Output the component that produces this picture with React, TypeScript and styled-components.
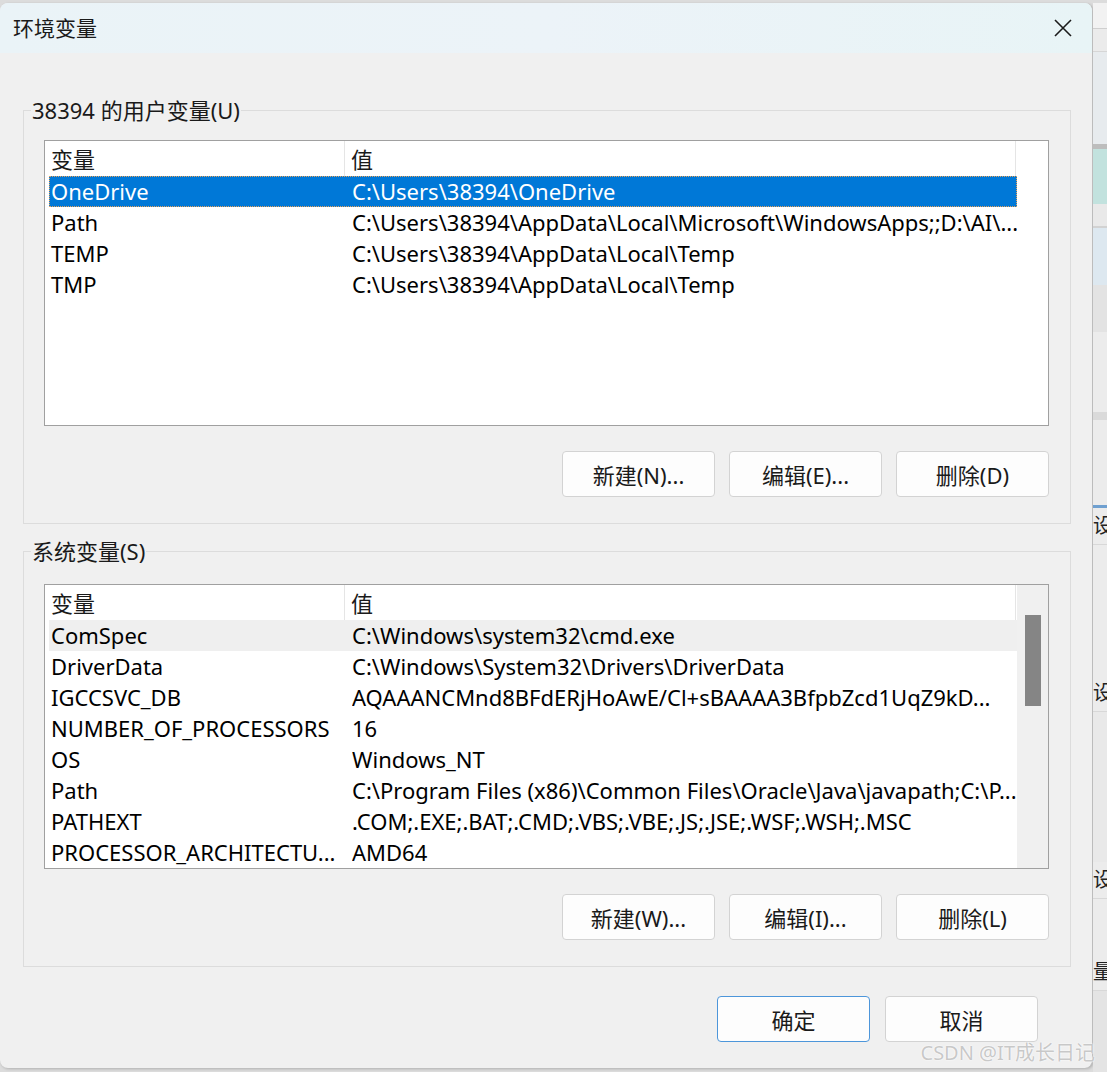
import React from 'react';
import styled, { createGlobalStyle } from 'styled-components';

const GlobalStyle = createGlobalStyle`
  html, body {
    margin: 0;
    padding: 0;
    background: #dedede;
  }
  body {
    font-family: "Noto Sans", "Noto Sans CJK SC", sans-serif;
    color: #000;
  }
`

type Row = { name: string; value: string }

const userVars: Row[] = [
  { name: 'OneDrive', value: 'C:\\Users\\38394\\OneDrive' },
  { name: 'Path', value: 'C:\\Users\\38394\\AppData\\Local\\Microsoft\\WindowsApps;;D:\\AI\\...' },
  { name: 'TEMP', value: 'C:\\Users\\38394\\AppData\\Local\\Temp' },
  { name: 'TMP', value: 'C:\\Users\\38394\\AppData\\Local\\Temp' },
]

const systemVars: Row[] = [
  { name: 'ComSpec', value: 'C:\\Windows\\system32\\cmd.exe' },
  { name: 'DriverData', value: 'C:\\Windows\\System32\\Drivers\\DriverData' },
  { name: 'IGCCSVC_DB', value: 'AQAAANCMnd8BFdERjHoAwE/Cl+sBAAAA3BfpbZcd1UqZ9kD...' },
  { name: 'NUMBER_OF_PROCESSORS', value: '16' },
  { name: 'OS', value: 'Windows_NT' },
  { name: 'Path', value: 'C:\\Program Files (x86)\\Common Files\\Oracle\\Java\\javapath;C:\\P...' },
  { name: 'PATHEXT', value: '.COM;.EXE;.BAT;.CMD;.VBS;.VBE;.JS;.JSE;.WSF;.WSH;.MSC' },
  { name: 'PROCESSOR_ARCHITECTU...', value: 'AMD64' },
]

// bands of the window that peeks out behind the dialog
const backBands = [
  { h: 25, c: '#f2f2f2' },
  { h: 1, c: '#cfcfcf' },
  { h: 22, c: '#ebebeb' },
  { h: 1, c: '#d6d6d6' },
  { h: 92, c: '#e7ebee' },
  { h: 5, c: '#bdbdbd' },
  { h: 55, c: '#c2e2de' },
  { h: 22, c: '#e9e9e9' },
  { h: 2, c: '#d2d2d2' },
  { h: 57, c: '#dde8f0' },
  { h: 47, c: '#e3e3e3' },
  { h: 80, c: '#ececec' },
  { h: 8, c: '#dadada' },
  { h: 85, c: '#ececec' },
  { h: 3, c: '#6fa0d0' },
]

const App: React.FC = () => {
  return (
    <Page>
      <GlobalStyle />
      <Dialog>
        <TitleBar>
          <Title>环境变量</Title>
          <svg width="18" height="18" viewBox="0 0 18 18">
            <path d="M1 1 L17 17 M17 1 L1 17" stroke="#1b1b1b" strokeWidth="1.6" fill="none" />
          </svg>
        </TitleBar>
        <Body>
          <Group $gap={15}>
            <legend>38394 的用户变量(U)</legend>
            <GroupInner $top={18}>
              <VarList rows={userVars} selected={0} height={284} />
              <ButtonRow>
                <Button>新建(N)...</Button>
                <Button>编辑(E)...</Button>
                <Button>删除(D)</Button>
              </ButtonRow>
            </GroupInner>
          </Group>
          <Group $gap={0}>
            <legend>系统变量(S)</legend>
            <GroupInner $top={21}>
              <VarList rows={systemVars} hovered={0} height={283} scroll />
              <ButtonRow>
                <Button>新建(W)...</Button>
                <Button>编辑(I)...</Button>
                <Button>删除(L)</Button>
              </ButtonRow>
            </GroupInner>
          </Group>
          <Footer>
            <Button $primary>确定</Button>
            <Button>取消</Button>
          </Footer>
        </Body>
      </Dialog>
      <BackStrip>
        {backBands.map((b, i) => (
          <Band key={i} $h={b.h} $c={b.c} />
        ))}
        <BackLabel>设置</BackLabel>
        <Band $h={130} $c="#ececec" />
        <BackLabel>设置</BackLabel>
        <Band $h={150} $c="#e9e9e9" />
        <BackLabel>设置</BackLabel>
        <Band $h={55} $c="#ececec" />
        <BackLabel>量</BackLabel>
      </BackStrip>
      <Watermark>CSDN @IT成长日记</Watermark>
    </Page>
  )
}

type ListProps = {
  rows: Row[]
  selected?: number
  hovered?: number
  height: number
  scroll?: boolean
}

const VarList: React.FC<ListProps> = ({ rows, selected, hovered, height, scroll }) => {
  return (
    <ListBox style={{ height }}>
      <ListMain>
        <Header>
          <HeadCell $w={300}>变量</HeadCell>
          <HeadCell $w={671}>值</HeadCell>
        </Header>
        {rows.map((r, i) => (
          <ItemRow
            key={i}
            $state={i === selected ? 'selected' : i === hovered ? 'hover' : 'none'}
          >
            <NameCell>{r.name}</NameCell>
            <ValueCell>{r.value}</ValueCell>
          </ItemRow>
        ))}
      </ListMain>
      <ScrollTrack $show={!!scroll}>
        {scroll && <Thumb />}
      </ScrollTrack>
    </ListBox>
  )
}

const Page = styled.div`
  position: relative;
  display: flex;
  align-items: flex-start;
  width: 1107px;
  height: 1072px;
  padding-top: 3px;
  box-sizing: border-box;
  overflow: hidden;
  background: #dcdcdc;
`

const Dialog = styled.div`
  width: 1093px;
  height: 1065px;
  flex-shrink: 0;
  display: flex;
  flex-direction: column;
  background: #f0f0f0;
  border-radius: 8px;
  border-right: 1px solid #bcbcbc;
  box-sizing: border-box;
  overflow: hidden;
  box-shadow: 1px 1px 3px rgba(0, 0, 0, 0.2);
`

const TitleBar = styled.div`
  height: 50px;
  flex-shrink: 0;
  display: flex;
  align-items: center;
  justify-content: space-between;
  padding: 0 20px 0 13px;
  background: linear-gradient(90deg, #eaf3f7 0%, #ecf3f8 50%, #e8f4f6 100%);
`

const Title = styled.div`
  font-size: 21px;
  line-height: 24px;
  color: #1a1a1a;
`

const Body = styled.div`
  flex: 1;
  display: flex;
  flex-direction: column;
  padding: 45px 21px 0 23px;
`

const Group = styled.fieldset<{ $gap: number }>`
  margin: 0 0 ${p => p.$gap}px 0;
  padding: 0;
  border: 1px solid #dcdcdc;
  min-width: 0;

  legend {
    margin-left: 7px;
    padding: 0 1px;
    font-size: 22px;
    line-height: 24px;
    color: #1a1a1a;
  }
`

const GroupInner = styled.div<{ $top: number }>`
  display: flex;
  flex-direction: column;
  padding: ${p => p.$top}px 21px 26px 20px;
`

const ListBox = styled.div`
  display: flex;
  border: 1px solid #a0a0a0;
  background: #fff;
  overflow: hidden;
`

const ListMain = styled.div`
  width: 972px;
  display: flex;
  flex-direction: column;
`

const Header = styled.div`
  display: flex;
  height: 35px;
  flex-shrink: 0;
`

const HeadCell = styled.div<{ $w: number }>`
  width: ${p => p.$w}px;
  padding-left: 6px;
  box-sizing: border-box;
  border-right: 1px solid #e5e5e5;
  font-size: 22px;
  line-height: 37px;
  color: #1a1a1a;
`

const ItemRow = styled.div<{ $state: 'selected' | 'hover' | 'none' }>`
  display: flex;
  height: 31px;
  flex-shrink: 0;
  margin-left: 4px;
  box-sizing: border-box;
  font-size: 22px;
  line-height: 31px;
  white-space: nowrap;
  background: ${p => (p.$state === 'selected' ? '#0078d7' : p.$state === 'hover' ? '#efefef' : 'transparent')};
  color: ${p => (p.$state === 'selected' ? '#fff' : '#000')};
  outline: ${p => (p.$state === 'selected' ? '1px dotted #e8a25a' : 'none')};
  outline-offset: -1px;
`

const NameCell = styled.div`
  width: 303px;
  padding-left: 2px;
  box-sizing: border-box;
  overflow: hidden;
`

const ValueCell = styled.div`
  flex: 1;
  overflow: hidden;
`

const ScrollTrack = styled.div<{ $show: boolean }>`
  flex: 1;
  display: flex;
  justify-content: center;
  padding-top: 30px;
  background: ${p => (p.$show ? '#f0f0f0' : '#fff')};
`

const Thumb = styled.div`
  width: 16px;
  height: 91px;
  background: #858585;
`

const ButtonRow = styled.div`
  display: flex;
  justify-content: flex-end;
  gap: 14px;
  margin-top: 25px;
`

const Button = styled.button<{ $primary?: boolean }>`
  width: 153px;
  height: 46px;
  padding: 0;
  border-radius: 4px;
  border: 1px solid ${p => (p.$primary ? '#4d96da' : '#d3d3d3')};
  background: #fdfdfd;
  font-family: "Noto Sans", "Noto Sans CJK SC", sans-serif;
  font-size: 22px;
  color: #1a1a1a;
`

const Footer = styled.div`
  display: flex;
  justify-content: flex-end;
  gap: 15px;
  margin-top: 29px;
  padding-right: 33px;
`

const BackStrip = styled.div`
  flex: 1;
  height: 1069px;
  display: flex;
  flex-direction: column;
  overflow: hidden;
  background: #e4e4e4;
`

const Band = styled.div<{ $h: number; $c: string }>`
  height: ${p => p.$h}px;
  flex-shrink: 0;
  background: ${p => p.$c};
`

const BackLabel = styled.div`
  height: 36px;
  flex-shrink: 0;
  font-size: 20px;
  line-height: 36px;
  white-space: nowrap;
  color: #222;
  background: #ececec;
  border-bottom: 1px solid #d8d8d8;
`

const Watermark = styled.div`
  position: absolute;
  right: 12px;
  bottom: 6px;
  font-size: 20px;
  color: rgba(190, 190, 190, 0.85);
  text-shadow: 0 0 2px #fff, 0 0 1px #fff;
  white-space: nowrap;
`

export default App
